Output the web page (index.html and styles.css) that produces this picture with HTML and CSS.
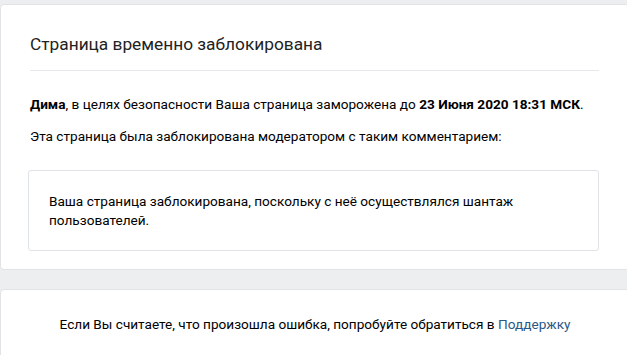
FILE: index.html
```html
<!DOCTYPE html>
<html lang="ru">
<head>
    <meta charset="UTF-8">
    <meta name="viewport" content="width=device-width, initial-scale=1.0">
    <title>Страница временно заблокирована</title>
    <link rel="stylesheet" href="styles.css">
</head>
<body>
    <div class="page-block blocked">
        <h2 class="blocked-title">Страница временно заблокирована</h2>
        <p class="blocked-text"><b>Дима</b>, в целях безопасности Ваша страница заморожена до <b>23 Июня 2020 18:31 МСК</b>.</p>
        <p class="blocked-text">Эта страница была заблокирована модератором с таким комментарием:</p>
        <div class="blocked-comment">
            Ваша страница заблокирована, поскольку с неё осуществлялся шантаж пользователей.
        </div>
    </div>

    <div class="page-block footer-block">
        Если Вы считаете, что произошла ошибка, попробуйте обратиться в <a href="#">Поддержку</a>
    </div>
</body>
</html>
```

FILE: styles.css
```css
body {
    margin: 0;
    padding-top: 4px;
    background-color: #edeef0;
    font-family: Roboto, "Liberation Sans", sans-serif;
    font-size: 13.6px;
    color: #000;
    overflow: hidden;
}

.page-block {
    width: 630px;
    background-color: #fff;
    border: 1px solid #e1e3e6;
    border-radius: 4px;
    box-sizing: border-box;
}

.blocked {
    padding: 18px 30px 18px 29px;
    margin-bottom: 19px;
}

.blocked-title {
    margin: 0;
    padding: 11px 0 16px;
    font-size: 17.3px;
    font-weight: normal;
    color: #222;
    border-bottom: 1px solid #e7e8ec;
}

.blocked-text {
    margin: 24px 0 0;
    line-height: 18px;
}

.blocked-text + .blocked-text {
    margin-top: 14px;
}

.blocked-comment {
    margin: 25px 0 0 -2px;
    padding: 21px 60px 20px 20px;
    border: 1px solid #dfe2e6;
    border-radius: 3px;
    line-height: 19px;
}

.footer-block {
    padding: 26px 0;
    text-align: center;
}

.footer-block a {
    color: #2a5885;
    text-decoration: none;
}
```
